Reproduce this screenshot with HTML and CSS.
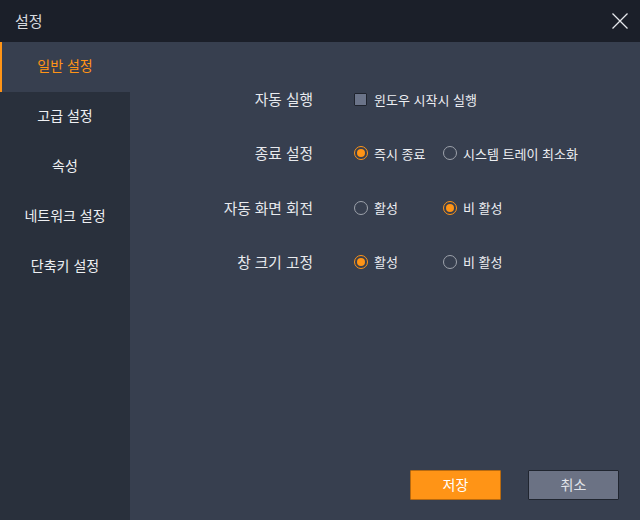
FILE: index.html
```html
<!DOCTYPE html>
<html lang="ko">
<head>
<meta charset="utf-8">
<title>설정</title>
<link rel="stylesheet" href="styles.css">
</head>
<body>
<div class="window">
  <header class="titlebar">
    <span class="title">설정</span>
    <svg class="close" width="16" height="16" viewBox="0 0 16 16">
      <path d="M0.5 0.5 L15.5 15.5 M15.5 0.5 L0.5 15.5" stroke="#e6e8ec" stroke-width="1.3" fill="none"/>
    </svg>
  </header>
  <div class="body">
    <nav class="sidebar">
      <div class="nav-item active">일반 설정</div>
      <div class="nav-item">고급 설정</div>
      <div class="nav-item">속성</div>
      <div class="nav-item">네트워크 설정</div>
      <div class="nav-item">단축키 설정</div>
    </nav>
    <main class="content">
      <div class="rows">
        <div class="row">
          <div class="label">자동 실행</div>
          <div class="controls">
            <span class="opt"><span class="checkbox"></span>윈도우 시작시 실행</span>
          </div>
        </div>
        <div class="row">
          <div class="label">종료 설정</div>
          <div class="controls">
            <span class="opt"><span class="radio on"></span>즉시 종료</span>
            <span class="opt"><span class="radio"></span>시스템 트레이 최소화</span>
          </div>
        </div>
        <div class="row">
          <div class="label">자동 화면 회전</div>
          <div class="controls">
            <span class="opt"><span class="radio"></span>활성</span>
            <span class="opt"><span class="radio on"></span>비 활성</span>
          </div>
        </div>
        <div class="row">
          <div class="label">창 크기 고정</div>
          <div class="controls">
            <span class="opt"><span class="radio on"></span>활성</span>
            <span class="opt"><span class="radio"></span>비 활성</span>
          </div>
        </div>
      </div>
      <div class="actions">
        <button class="btn primary">저장</button>
        <button class="btn secondary">취소</button>
      </div>
    </main>
  </div>
</div>
</body>
</html>
```

FILE: styles.css
```css
* { box-sizing: border-box; }
html, body { margin: 0; padding: 0; }
body {
  width: 640px;
  height: 520px;
  overflow: hidden;
  font-family: "Noto Sans CJK KR", "Noto Sans", sans-serif;
  background: #373f4f;
  color: #e8eaee;
}
.window {
  display: flex;
  flex-direction: column;
  height: 520px;
}
.titlebar {
  height: 42px;
  flex: none;
  background: #1b1f29;
  display: flex;
  align-items: center;
  justify-content: space-between;
  padding: 0 12px 0 15px;
}
.title {
  font-size: 15px;
  color: #d6d9de;
  line-height: 1;
  margin-top: -2px;
}
.close { display: block; margin-top: -1px; }
.body {
  flex: 1;
  display: flex;
}
.sidebar {
  width: 130px;
  flex: none;
  background: #29303c;
}
.nav-item {
  height: 50px;
  display: flex;
  align-items: center;
  justify-content: center;
  font-size: 14px;
  color: #eef0f3;
  padding-bottom: 4px;
}
.nav-item.active {
  background: #373f4f;
  color: #ff9416;
  border-left: 2px solid #ff9416;
  padding-right: 2px;
}
.content {
  flex: 1;
  display: flex;
  flex-direction: column;
  padding: 30px 21px 20px 0;
}
.rows { display: flex; flex-direction: column; }
.row {
  height: 54.3px;
  display: flex;
  align-items: flex-start;
}
.label {
  width: 183px;
  text-align: right;
  font-size: 14.7px;
  height: 20px;
  line-height: 20px;
  margin-top: 17px;
}
.controls {
  margin-left: 41px;
  display: flex;
  height: 20px;
  margin-top: 17px;
  align-items: center;
}
.opt {
  display: inline-flex;
  align-items: center;
  min-width: 89px;
  font-size: 13px;
  color: #eceef2;
  white-space: nowrap;
}
.checkbox {
  width: 13px;
  height: 13px;
  background: #6b7489;
  border: 1px solid #1f242e;
  border-radius: 1px;
  margin-right: 7px;
  flex: none;
}
.radio {
  width: 14px;
  height: 14px;
  border-radius: 50%;
  border: 1.5px solid #9da2ab;
  margin-right: 6px;
  flex: none;
  display: flex;
  align-items: center;
  justify-content: center;
}
.radio.on { border-color: #ff9416; }
.radio.on::after {
  content: "";
  width: 8px;
  height: 8px;
  border-radius: 50%;
  background: #ff9416;
}
.actions {
  margin-top: auto;
  display: flex;
  justify-content: flex-end;
  gap: 27px;
}
.btn {
  width: 91px;
  height: 30px;
  font-family: inherit;
  font-size: 14px;
  border-radius: 1px;
  padding: 0 0 2px;
  cursor: pointer;
}
.btn.primary {
  background: #ff9416;
  border: 1px solid #b86a10;
  color: #ffffff;
}
.btn.secondary {
  background: #6b7284;
  border: 1px solid #20252f;
  color: #e2e5ea;
}
```
